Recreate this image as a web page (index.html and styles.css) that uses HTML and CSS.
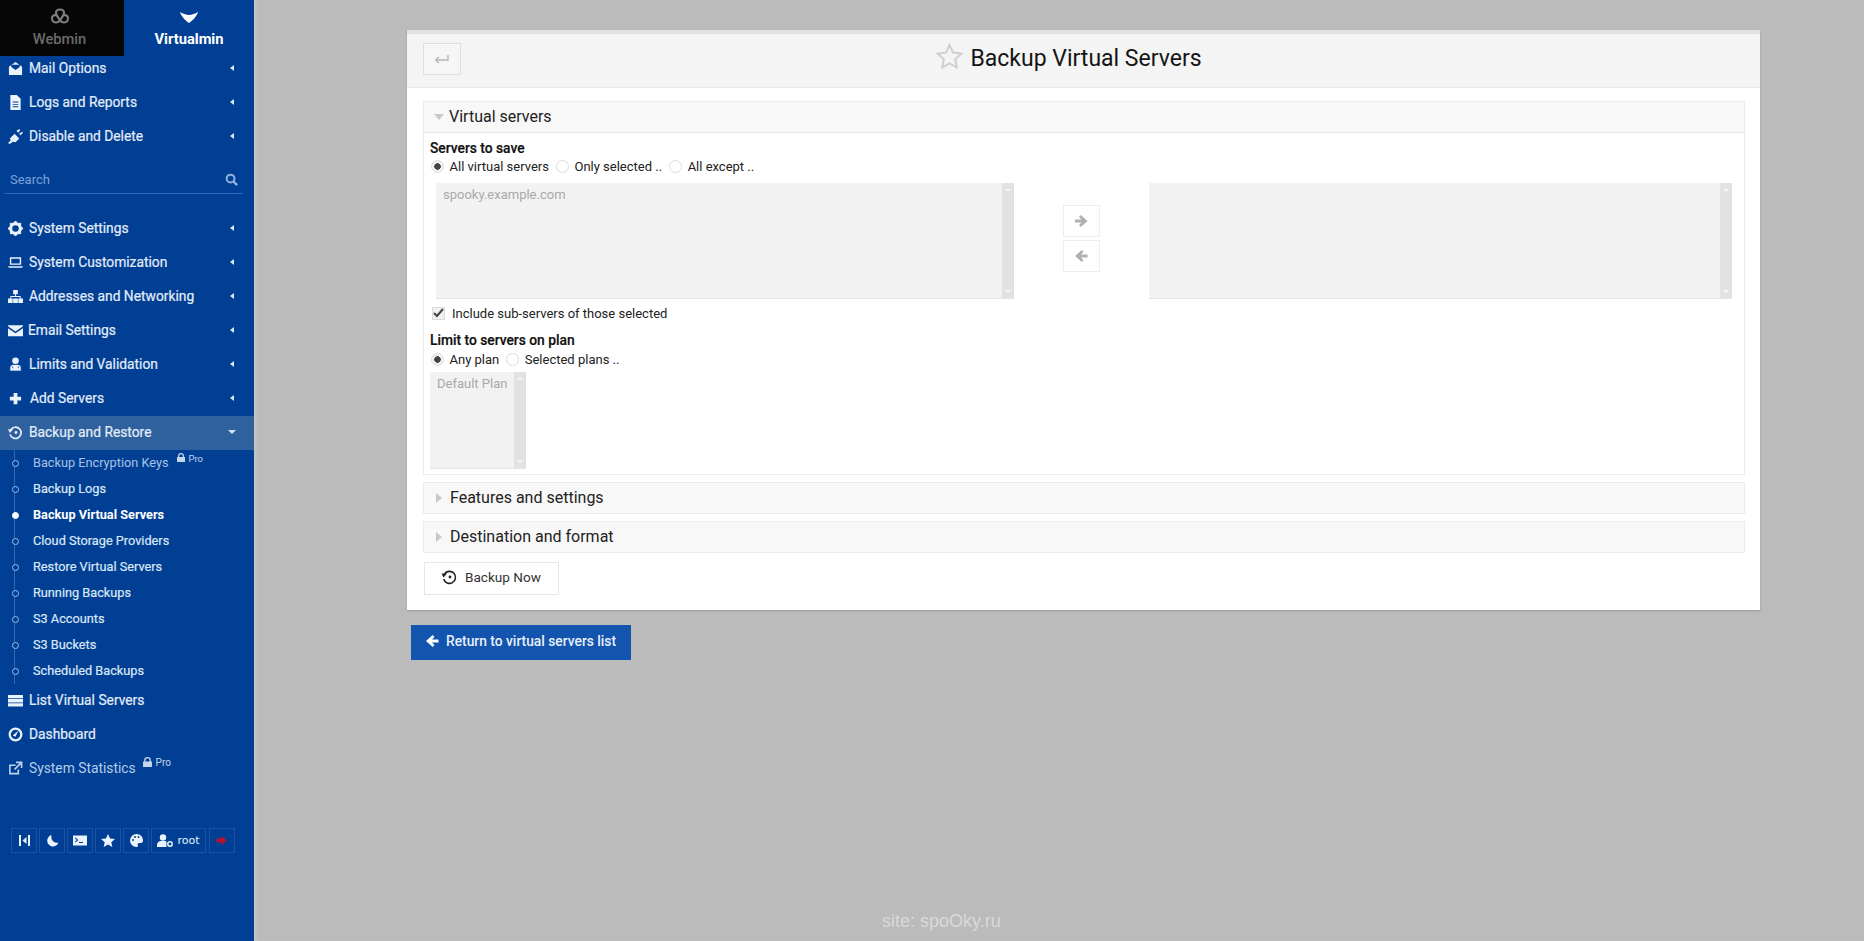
FILE: index.html
```html
<!DOCTYPE html>
<html lang="en">
<head>
<meta charset="utf-8">
<title>Backup Virtual Servers</title>
<link rel="stylesheet" href="styles.css">
</head>
<body>
<aside class="sidebar">
  <div class="tabs">
    <div class="tab tab-dark">
      <svg class="tab-icon" width="20" height="18" viewBox="0 0 20 18"><path d="M10 1.500c-2.500 0-4 1.500-4 3.500 0 .7.2 1.300.5 1.800C4 6.700 2 8 2 10.500 2 13 4 14.500 6 14.500c1.600 0 3-1 4-2 1 1 2.400 2 4 2 2 0 4-1.500 4-4 0-2.500-2-3.800-4.500-3.700.3-.5.500-1.100.5-1.800 0-2-1.500-3.500-4-3.500z M6.500 6.800L10 12.500l3.500-5.700" fill="none" stroke="#7d7d7d" stroke-width="2.200" stroke-linejoin="round"/></svg>
      <span>Webmin</span>
    </div>
    <div class="tab">
      <svg class="tab-icon" width="20" height="18" viewBox="0 0 20 18"><path d="M1 4c3 1.600 6 3 9 3s6-1.400 9-3c-.5 3-5.500 9-9 11C6.500 13 1.500 7 1 4z" fill="#fff"/></svg>
      <span>Virtualmin</span>
    </div>
  </div>
  <nav class="nav nav-first">
    <a class="row"><svg class="ic" viewBox="0 0 16 16"><path d="M1 6l7-5 7 5v9H1z M3.500 6.500L8 9.500l4.500-3V4h-9z" fill="#eaf2fb" fill-rule="evenodd"/></svg><span class="lbl">Mail Options</span><i class="caret"></i></a>
    <a class="row"><svg class="ic" viewBox="0 0 16 16"><path d="M2.500 0h7l4 4v12h-11z M5 7v1h6V7z M5 9.500v1h6v-1z M5 12v1h6v-1z" fill="#eaf2fb" fill-rule="evenodd"/></svg><span class="lbl">Logs and Reports</span><i class="caret"></i></a>
    <a class="row"><svg class="ic" viewBox="0 0 16 16"><path d="M0 15l3-3-1-2 5-5 5 5-4 4-3-.5-3 2.500z M9 2l3-2 1 1-2 3z M12 5l3-2 1 1-3 3z" fill="#eaf2fb"/></svg><span class="lbl">Disable and Delete</span><i class="caret"></i></a>
  </nav>
  <div class="search"><span>Search</span><svg width="13" height="13" viewBox="0 0 14 14"><circle cx="6" cy="6" r="4.200" fill="none" stroke="#8fb0da" stroke-width="2.200"/><path d="M9 9l4 4" stroke="#8fb0da" stroke-width="2.600"/></svg></div>
  <nav class="nav">
    <a class="row"><svg class="ic" viewBox="0 0 16 16"><circle cx="8" cy="8" r="5.200" fill="none" stroke="#eaf2fb" stroke-width="3.400"/><path d="M8 0v16M0 8h16M2.300 2.300l11.400 11.400M13.700 2.300L2.300 13.700" stroke="#eaf2fb" stroke-width="2.200" stroke-dasharray="2.400 11.200"/></svg><span class="lbl">System Settings</span><i class="caret"></i></a>
    <a class="row"><svg class="ic" viewBox="0 0 16 16"><path d="M2 2.500h12v8H2z M3.500 4v5h9V4z M0 12h16l-1 1.500H1z" fill="#eaf2fb" fill-rule="evenodd"/></svg><span class="lbl">System Customization</span><i class="caret"></i></a>
    <a class="row"><svg class="ic" viewBox="0 0 16 16"><path d="M5.500 1h5v4.500h-5z M0 10h5v5H0z M5.500 10h5v5h-5z M11 10h5v5h-5z M7.500 5.500h1v2h5v2.500h-1V8.500H3.500V10h-1V7.500h5z" fill="#eaf2fb"/></svg><span class="lbl">Addresses and Networking</span><i class="caret"></i></a>
    <a class="row"><svg class="ic ic-sm" viewBox="0 0 16 16"><path d="M0 2.500h16v1L8 9 0 3.500z M0 5.500L8 11l8-5.500V14H0z" fill="#eaf2fb"/></svg><span class="lbl">Email Settings</span><i class="caret"></i></a>
    <a class="row"><svg class="ic" viewBox="0 0 16 16"><circle cx="8" cy="4" r="3.500" fill="#eaf2fb"/><path d="M2 15v-3.500C2 9 4 8 5.500 8h5C12 8 14 9 14 11.500V15z M5 10v2M11 10v2" fill="#eaf2fb" stroke="#003f94" stroke-width=".8"/></svg><span class="lbl">Limits and Validation</span><i class="caret"></i></a>
    <a class="row"><svg class="ic" viewBox="0 0 16 16"><path d="M6 2h4v4h4v4h-4v4H6v-4H2V6h4z" fill="#eaf2fb"/></svg><span class="lbl lbl-add">Add Servers</span><i class="caret"></i></a>
    <a class="row row-active"><svg class="ic" viewBox="0 0 16 16"><use href="#history"/></svg><span class="lbl">Backup and Restore</span><i class="caret caret-down"></i></a>
  </nav>
  <ul class="sub">
    <li class="sub-item sub-muted">Backup Encryption Keys<span class="pro"><svg width="8" height="9" viewBox="0 0 8 9"><path d="M1 4V3a3 3 0 0 1 6 0v1h1v5H0V4z M2.200 4h3.600V3a1.800 1.800 0 0 0-3.600 0z" fill-rule="evenodd" fill="#c6d6ec"/></svg>Pro</span></li>
    <li class="sub-item">Backup Logs</li>
    <li class="sub-item sub-on">Backup Virtual Servers</li>
    <li class="sub-item">Cloud Storage Providers</li>
    <li class="sub-item">Restore Virtual Servers</li>
    <li class="sub-item">Running Backups</li>
    <li class="sub-item">S3 Accounts</li>
    <li class="sub-item">S3 Buckets</li>
    <li class="sub-item">Scheduled Backups</li>
  </ul>
  <nav class="nav">
    <a class="row"><svg class="ic" viewBox="0 0 16 16"><path d="M0 2h16v3.500H0z M0 6.500h16V10H0z M0 11h16v3.500H0z" fill="#eaf2fb"/></svg><span class="lbl">List Virtual Servers</span></a>
    <a class="row"><svg class="ic" viewBox="0 0 16 16"><circle cx="8" cy="8" r="6.200" fill="none" stroke="#eaf2fb" stroke-width="2.400"/><path d="M5 9l6-5-3 6.500z" fill="#eaf2fb"/></svg><span class="lbl">Dashboard</span></a>
    <a class="row row-muted"><svg class="ic" viewBox="0 0 16 16"><path d="M11 9v4.500H2v-9h6M8.500 1.500h6v6M14 2L7 9" fill="none" stroke="#c0d3ec" stroke-width="1.700"/></svg><span class="lbl">System Statistics<span class="pro pro-lg"><svg width="9" height="10" viewBox="0 0 8 9"><path d="M1 4V3a3 3 0 0 1 6 0v1h1v5H0V4z M2.200 4h3.600V3a1.800 1.800 0 0 0-3.600 0z" fill-rule="evenodd" fill="#c6d6ec"/></svg>Pro</span></span></a>
  </nav>
  <div class="tools">
    <span class="tool"><svg width="13" height="13" viewBox="0 0 13 13"><path d="M1 1h2v11H1z M10 1h2v11h-2z M8.500 3v7L4.500 6.500z" fill="#eaf2fb"/></svg></span>
    <span class="tool"><svg width="13" height="13" viewBox="0 0 13 13"><path d="M5.500 1a5.800 5.800 0 1 0 7 7.500C8 9.500 4.500 6 5.500 1z" fill="#eaf2fb"/></svg></span>
    <span class="tool"><svg width="14" height="13" viewBox="0 0 14 13"><path d="M0 1.500h14v10H0z M2.500 3.500l-.7.7 2 1.800-2 1.800.7.700 2.800-2.500z M6 8v1h4V8z" fill="#eaf2fb" fill-rule="evenodd"/></svg></span>
    <span class="tool"><svg width="14" height="13" viewBox="0 0 14 13"><path d="M7 0l2 4.400 5 .5-3.700 3.300 1 4.800L7 10.600 2.700 13l1-4.800L0 4.900l5-.5z" fill="#eaf2fb"/></svg></span>
    <span class="tool"><svg width="13" height="13" viewBox="0 0 13 13"><path d="M6.500 0a6.500 6.500 0 0 0 0 13c1.500 0 1.800-1 1.300-2-.5-1.200.3-2 1.500-2h1.500c1.500 0 2.200-1 2.200-2.500C13 2.800 10 0 6.500 0z" fill="#eaf2fb"/><circle cx="3" cy="6" r="1" fill="#003f94"/><circle cx="5" cy="3" r="1" fill="#003f94"/><circle cx="8.500" cy="3" r="1" fill="#003f94"/></svg></span>
    <span class="tool tool-wide"><svg width="16" height="13" viewBox="0 0 16 13"><circle cx="6" cy="3.500" r="3.200" fill="#eaf2fb"/><path d="M0 13v-2c0-2.500 2-4 4-4h4c1 0 1.500.5 1.500 1.500v4.500z" fill="#eaf2fb"/><circle cx="13" cy="10" r="2.200" fill="none" stroke="#eaf2fb" stroke-width="1.500"/></svg><span>root</span></span>
    <span class="tool tool-last"><svg width="12" height="11" viewBox="0 0 13 13"><path d="M0 4h6V1l6 5.500-6 5.500V9H0z" fill="#b8122a"/></svg></span>
  </div>
</aside>

<main class="main">
  <section class="panel">
    <header class="panel-head">
      <span class="back"><svg width="16" height="12" viewBox="0 0 16 12"><path d="M1.500 7H14V2M1.500 7l3.500-3M1.500 7l3.500 3" fill="none" stroke="#b8b8b8" stroke-width="1.500"/></svg></span>
      <h1 class="title"><svg class="star" width="27" height="26" viewBox="0 0 27 26"><path d="M13.500 2l3.500 7.600 8.300 1-6.100 5.700 1.600 8.200-7.300-4.100-7.300 4.100 1.600-8.200-6.100-5.700 8.300-1z" fill="none" stroke="#cfcfcf" stroke-width="2"/></svg><span>Backup Virtual Servers</span></h1>
    </header>
    <div class="panel-body">
      <div class="sec sec-open">
        <div class="sec-head"><i class="tri tri-down"></i><span>Virtual servers</span></div>
        <div class="sec-body">
          <div class="field-title">Servers to save</div>
          <div class="radios">
            <span class="radio radio-on"></span><span class="rlabel">All virtual servers</span>
            <span class="radio"></span><span class="rlabel">Only selected ..</span>
            <span class="radio"></span><span class="rlabel">All except ..</span>
          </div>
          <div class="dual">
            <div class="listbox listbox-left"><div class="lb-text">spooky.example.com</div><div class="lb-scroll"><i class="up"></i><i class="down"></i></div></div>
            <div class="movers">
              <span class="mover"><svg width="13" height="12" viewBox="0 0 13 12"><path d="M0 4.500h6.500L4 2l1.800-2L12.500 6l-6.700 6L4 10l2.500-2.500H0z" fill="#b0b0b0"/></svg></span>
              <span class="mover"><svg width="13" height="12" viewBox="0 0 13 12"><path d="M12.500 4.500H6L8.500 2 6.700 0 0 6l6.700 6 1.800-2L6 7.500h6.500z" fill="#b0b0b0"/></svg></span>
            </div>
            <div class="listbox listbox-right"><div class="lb-text"></div><div class="lb-scroll"><i class="up"></i><i class="down"></i></div></div>
          </div>
          <div class="check-row"><span class="check"><svg width="11" height="10" viewBox="0 0 11 10"><path d="M1 5l3 3 6-7" fill="none" stroke="#444" stroke-width="2"/></svg></span><span>Include sub-servers of those selected</span></div>
          <div class="field-title field-plan">Limit to servers on plan</div>
          <div class="radios radios-plan">
            <span class="radio radio-on"></span><span class="rlabel">Any plan</span>
            <span class="radio"></span><span class="rlabel">Selected plans ..</span>
          </div>
          <div class="listbox listbox-plan"><div class="lb-text lb-plan">Default Plan</div><div class="lb-scroll"><i class="up"></i><i class="down"></i></div></div>
        </div>
      </div>
      <div class="sec"><div class="sec-head"><i class="tri"></i><span>Features and settings</span></div></div>
      <div class="sec"><div class="sec-head"><i class="tri"></i><span>Destination and format</span></div></div>
      <button class="backup" type="button"><svg width="17" height="16" viewBox="0 0 16 16"><use href="#history-dark"/></svg><span>Backup Now</span></button>
    </div>
  </section>
  <a class="return"><svg width="13" height="12" viewBox="0 0 13 12"><path d="M12.500 4.500H6L8.500 2 6.700 0 0 6l6.700 6 1.800-2L6 7.500h6.500z" fill="#fff"/></svg><span>Return to virtual servers list</span></a>
  <div class="watermark">site: spoOky.ru</div>
</main>

<svg class="defs" width="0" height="0" aria-hidden="true">
  <symbol id="history" viewBox="0 0 16 16"><path d="M3 5A6 6 0 1 1 2.200 10" fill="none" stroke="#eaf2fb" stroke-width="1.800"/><path d="M0 4.500h5.500L2 8.500z" fill="#eaf2fb"/><circle cx="8.500" cy="8" r="1.500" fill="#eaf2fb"/></symbol>
  <symbol id="history-dark" viewBox="0 0 16 16"><path d="M3 5A6 6 0 1 1 2.200 10" fill="none" stroke="#222" stroke-width="1.600"/><path d="M0 4.500h5.500L2 8.500z" fill="#222"/><circle cx="8.500" cy="8" r="1.400" fill="#222"/></symbol>
</svg>
</body>
</html>
```

FILE: styles.css
```css
* { box-sizing: border-box; }
html, body { height: 100%; }
body {
  margin: 0;
  display: flex;
  height: 941px;
  overflow: hidden;
  background: #bbbbbb;
  font-family: Roboto, "Liberation Sans", sans-serif;
  font-size: 13px;
  color: #222;
}
.defs { position: absolute; }

/* sidebar */
.sidebar {
  width: 254px;
  flex: none;
  background: #003f94;
  color: #e6effa;
  display: flex;
  flex-direction: column;
}
.tabs { display: flex; height: 52px; position: relative; }
.tab {
  width: 130px;
  height: 56px;
  padding-top: 8px;
  display: flex;
  flex-direction: column;
  align-items: center;
  gap: 4px;
  font-size: 14.700px;
  font-weight: 700;
  color: #fff;
  position: relative;
  z-index: 2;
}
.tab-dark { width: 124px; padding-right: 5px; background: #060606; color: #6b6b6b; font-weight: 500; }
.tab-icon { display: block; }
.nav { display: flex; flex-direction: column; }
.row {
  height: 34px;
  display: flex;
  align-items: center;
  padding: 0 18px 2px 8px;
  font-size: 13.800px;
  font-weight: 400;
  color: #e3edf9;
  -webkit-text-stroke: .2px #e3edf9;
}
.ic { width: 15px; height: 15px; flex: none; margin-right: 6px; }
.ic-sm { margin-right: 5px; }
.lbl { flex: 1; white-space: nowrap; }
.lbl-add { margin-left: 1px; }
.caret {
  width: 0; height: 0;
  margin-right: 2px;
  border-style: solid;
  border-width: 3.500px 4px 3.500px 0;
  border-color: transparent #dbe6f5 transparent transparent;
}
.caret-down {
  margin-right: 0;
  border-width: 4px 4px 0 4px;
  border-color: #dbe6f5 transparent transparent transparent;
}
.row-active { background: #2f619f; }
.row-muted, .row-muted .lbl { color: #b5cbe8; -webkit-text-stroke: 0; }
.search {
  margin: 12px 11px 18px 4px;
  height: 28px;
  padding: 0 5px 0 6px;
  display: flex;
  align-items: center;
  justify-content: space-between;
  border-bottom: 1px solid #2a69bb;
  color: #7ea3d6;
  font-size: 13px;
}
.sub {
  list-style: none;
  margin: 0;
  padding: 0;
  position: relative;
}
.sub::before {
  content: "";
  position: absolute;
  left: 14px;
  top: 0;
  bottom: 0;
  width: 1px;
  background: #2f69b0;
}
.sub-item {
  height: 26px;
  padding: 0 0 2px 33px;
  display: flex;
  align-items: center;
  font-size: 12.720px;
  color: #dbe7f7;
  -webkit-text-stroke: .2px #dbe7f7;
  position: relative;
  white-space: nowrap;
}
.sub-item::before {
  content: "";
  position: absolute;
  left: 12px;
  top: 10px;
  width: 5px;
  height: 5px;
  border-radius: 50%;
  border: 1px solid #9dbce4;
  background: #003f94;
}
.sub-muted { color: #a8c1e3; -webkit-text-stroke: 0; }
.sub-on { color: #fff; font-weight: 700; -webkit-text-stroke: 0; }
.sub-on::before { background: #fff; border-color: #fff; }
.pro {
  display: inline-flex;
  align-items: flex-start;
  gap: 4px;
  margin: -8px 0 0 8px;
  font-size: 9.500px;
  color: #c6d6ec;
  -webkit-text-stroke: 0;
}
.pro-lg { margin: -9px 0 0 7px; position: relative; top: -6px; font-size: 10px; }
.tools {
  margin-top: 42px;
  padding-left: 11px;
  display: flex;
  gap: 2px;
}
.tool {
  width: 26px;
  height: 25px;
  display: flex;
  align-items: center;
  justify-content: center;
  gap: 4px;
  border: 1px solid #1a53a3;
  font-family: "DejaVu Sans", sans-serif;
  font-size: 11px;
  color: #eaf2fb;
}
.tool-wide { width: 55px; }
.tool-last { margin-left: 1px; }

/* main */
.main {
  flex: 1;
  min-width: 0;
  padding: 30px 104px 0 153px;
  position: relative;
  box-shadow: inset 3px 0 3px -1px #c8c8c8;
}
.panel {
  background: #fff;
  border-top: 4px solid #e2e2e2;
  box-shadow: 0 1px 2px #9a9a9a;
  height: 580px;
}
.panel-head {
  height: 54px;
  background: #f4f4f4;
  border-bottom: 1px solid #e9e9e9;
  padding: 9px 16px;
  position: relative;
  display: flex;
  align-items: flex-start;
  justify-content: center;
}
.back {
  position: absolute;
  left: 16px;
  top: 9px;
  width: 38px;
  height: 32px;
  display: flex;
  align-items: center;
  justify-content: center;
  border: 1px solid #dedede;
  background: #f6f6f6;
}
.title {
  margin: 0 29px 0 0;
  display: flex;
  align-items: center;
  gap: 7px;
  height: 30px;
  font-size: 23px;
  font-weight: 400;
  color: #151515;
}
.star { margin-top: -4px; }
.panel-body {
  padding: 13px 15px 0 16px;
  display: flex;
  flex-direction: column;
  gap: 7px;
}
.sec { border: 1px solid #ececec; }
.sec-head {
  height: 30px;
  background: #f8f8f8;
  display: flex;
  align-items: center;
  gap: 8px;
  padding: 0 0 1px 11px;
  font-size: 16px;
  color: #222;
}
.sec-open { height: 374px; }
.sec-open .sec-head { height: 31px; border-bottom: 1px solid #e8e8e8; }
.tri {
  width: 0; height: 0;
  margin-left: 1px;
  border-style: solid;
  border-width: 5px 0 5px 6px;
  border-color: transparent transparent transparent #c8c8c8;
}
.tri-down {
  margin-left: -1px;
  margin-right: -3px;
  border-width: 6px 5px 0 5px;
  border-color: #c8c8c8 transparent transparent transparent;
}
.sec-body { padding: 6px 10px 0 6px; }
.field-title { height: 19px; line-height: 19px; font-size: 13.800px; font-weight: 500; color: #111; -webkit-text-stroke: .2px #111; }
.radios { height: 19px; margin-top: -1px; display: flex; align-items: center; font-size: 13px; }
.radio {
  width: 13px;
  height: 13px;
  margin-right: 5.500px;
  border-radius: 50%;
  border: 1px solid #dcdcdc;
  background: #fff;
  flex: none;
  margin-left: 1px;
  position: relative;
}
.radio-on { background: radial-gradient(circle, #444 0 3px, #f1f1f1 3.500px); margin-left: .5px; margin-right: 6px; }
.rlabel { margin-right: 6px; }
.dual { display: flex; margin: 7px 0 0 6px; }
.listbox {
  height: 116px;
  background: #f2f2f2;
  border-bottom: 1px solid #e4e4e4;
  display: flex;
  color: #a9a9a9;
}
.listbox-left { width: 578px; }
.listbox-right { width: 583px; }
.listbox-plan { width: 96px; height: 97px; margin-top: 3px; }
.lb-text { flex: 1; min-width: 0; padding: 4px 7px; font-size: 13px; }
.lb-plan { padding: 4px 7px; white-space: nowrap; overflow: hidden; }
.lb-scroll {
  width: 12px;
  flex: none;
  background: #e2e2e2;
  display: flex;
  flex-direction: column;
  justify-content: space-between;
  align-items: center;
  padding: 5px 0;
}
.up, .down { width: 0; height: 0; border-style: solid; }
.up { border-width: 0 3px 3px; border-color: transparent transparent #f5f5f5; }
.down { border-width: 3px 3px 0; border-color: #f5f5f5 transparent transparent; }
.movers {
  width: 135px;
  padding-top: 22px;
  display: flex;
  flex-direction: column;
  align-items: center;
  gap: 3px;
}
.mover {
  width: 37px;
  height: 32px;
  display: flex;
  align-items: center;
  justify-content: center;
  border: 1px solid #eeeeee;
}
.check-row { display: flex; align-items: center; height: 28px; padding-left: 2px; gap: 7px; font-size: 13px; }
.check {
  width: 13px;
  height: 13px;
  display: flex;
  align-items: center;
  justify-content: center;
  border: 1px solid #dcdcdc;
  background: #f1f1f1;
}
.field-plan { margin-top: 4px; }
.radios-plan { margin-top: 0; }
.backup {
  align-self: flex-start;
  width: 135px;
  height: 33px;
  margin: 2px 0 0 1px;
  padding: 0 0 4px 16px;
  display: flex;
  align-items: center;
  gap: 7px;
  background: #fff;
  border: 1px solid #e6e6e6;
  font: 400 13.600px Roboto, sans-serif;
  color: #333;
}
.return {
  width: 220px;
  height: 35px;
  margin: 15px 0 0 4px;
  padding: 0 0 3px 15px;
  display: flex;
  align-items: center;
  gap: 7px;
  background: #1254ae;
  color: #e8f0fb;
  font-size: 13.800px;
  font-weight: 500;
  white-space: nowrap;
}
.watermark {
  position: absolute;
  left: 628px;
  top: 911px;
  font-family: "Liberation Sans", sans-serif;
  font-size: 18px;
  color: #d9d9d9;
}
```
